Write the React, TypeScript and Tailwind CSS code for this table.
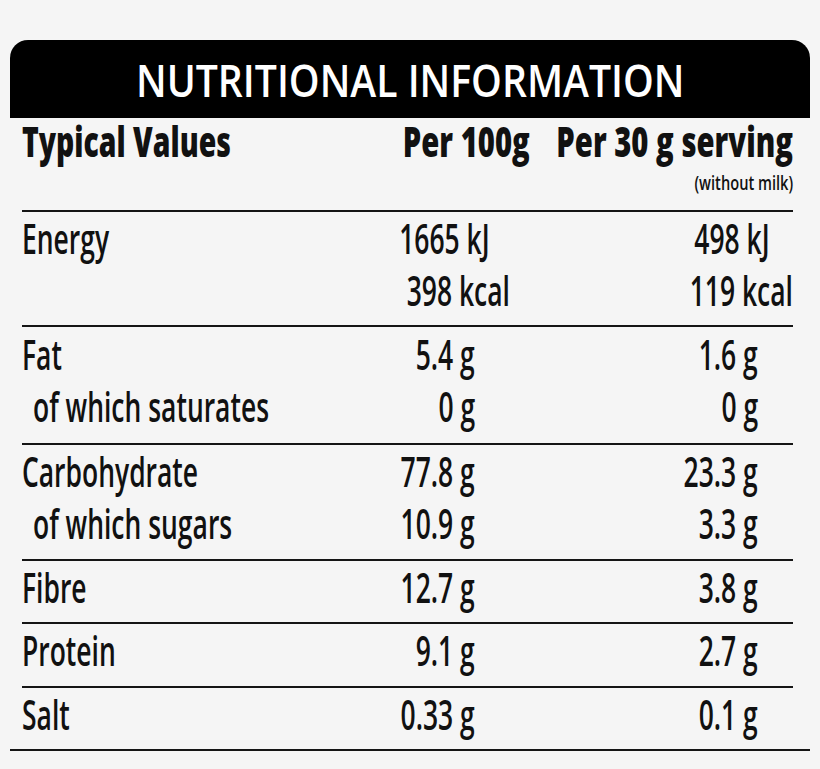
type Cell = { text: string; pad: string };

type Section = {
  labels: { text: string; indent?: boolean }[];
  per100: Cell[];
  serving: Cell[];
  space: string;
};

// right padding so the units line up the way the printed label does
const G_A = 'pr-[35px]';
const G_B = 'pr-[35px]';

const sections: Section[] = [
  {
    labels: [{ text: 'Energy' }, { text: '' }],
    per100: [
      { text: '1665 kJ', pad: 'pr-[20px]' },
      { text: '398 kcal', pad: 'pr-0' },
    ],
    serving: [
      { text: '498 kJ', pad: 'pr-[23px]' },
      { text: '119 kcal', pad: 'pr-0' },
    ],
    space: 'pb-[9px]',
  },
  {
    labels: [{ text: 'Fat' }, { text: 'of which saturates', indent: true }],
    per100: [
      { text: '5.4 g', pad: G_A },
      { text: '0 g', pad: G_A },
    ],
    serving: [
      { text: '1.6 g', pad: G_B },
      { text: '0 g', pad: G_B },
    ],
    space: 'pt-[1px] pb-[11px]',
  },
  {
    labels: [{ text: 'Carbohydrate' }, { text: 'of which sugars', indent: true }],
    per100: [
      { text: '77.8 g', pad: G_A },
      { text: '10.9 g', pad: G_A },
    ],
    serving: [
      { text: '23.3 g', pad: G_B },
      { text: '3.3 g', pad: G_B },
    ],
    space: 'pb-[10px]',
  },
  {
    labels: [{ text: 'Fibre' }],
    per100: [{ text: '12.7 g', pad: G_A }],
    serving: [{ text: '3.8 g', pad: G_B }],
    space: 'pb-[9px]',
  },
  {
    labels: [{ text: 'Protein' }],
    per100: [{ text: '9.1 g', pad: G_A }],
    serving: [{ text: '2.7 g', pad: G_B }],
    space: 'pb-[10px]',
  },
  {
    labels: [{ text: 'Salt' }],
    per100: [{ text: '0.33 g', pad: G_A }],
    serving: [{ text: '0.1 g', pad: G_B }],
    space: 'pb-[9px]',
  },
];

function Narrow({ children, className = '' }: { children: React.ReactNode; className?: string }) {
  return (
    <span className={`inline-block whitespace-nowrap scale-x-[0.63] ${className}`}>
      {children}
    </span>
  );
}

function NutritionSection({ section }: { section: Section }) {
  return (
    <div className={`border-t-2 border-[#151515] ${section.space}`}>
      {section.labels.map((label, i) => (
        <div
          key={i}
          className="grid grid-cols-[minmax(0,1fr)_240px_283px] h-[52px] leading-[52px] text-[42px] font-semibold"
        >
          <div className="min-w-0">
            {label.text && (
              <Narrow className={label.indent ? 'origin-left ml-[11px]' : 'origin-left'}>
                {label.text}
              </Narrow>
            )}
          </div>
          <div className={`flex justify-end ${section.per100[i]?.pad ?? ''}`}>
            {section.per100[i] && <Narrow className="origin-right">{section.per100[i].text}</Narrow>}
          </div>
          <div className={`flex justify-end ${section.serving[i]?.pad ?? ''}`}>
            {section.serving[i] && <Narrow className="origin-right">{section.serving[i].text}</Narrow>}
          </div>
        </div>
      ))}
    </div>
  );
}

export default function App() {
  return (
    <div className="min-h-[769px] w-[820px] bg-[#f5f5f5] pt-[40px] font-['Open_Sans',sans-serif] text-[#111111]">
      <div className="ml-[10px] w-[800px]">
        {/* Title bar */}
        <div className="flex h-[78px] items-center justify-center rounded-t-[18px] bg-black">
          <span className="inline-block whitespace-nowrap scale-x-[0.87] text-[45px] leading-[45px] font-semibold text-white">
            NUTRITIONAL INFORMATION
          </span>
        </div>

        {/* Column headings */}
        <div className="h-[92px] px-[12px] pr-[17px]">
          <div className="grid grid-cols-[minmax(0,1fr)_260px_263px] text-[43px] leading-[46px] font-extrabold">
            <div className="min-w-0">
              <span className="inline-block whitespace-nowrap scale-x-[0.66] origin-left">Typical Values</span>
            </div>
            <div className="flex justify-end">
              <span className="inline-block whitespace-nowrap scale-x-[0.68] origin-right">Per 100g</span>
            </div>
            <div className="flex justify-end">
              <span className="inline-block whitespace-nowrap scale-x-[0.68] origin-right">Per 30 g serving</span>
            </div>
          </div>
          <div className="flex justify-end text-[19px] leading-[38px] font-semibold">
            <span className="inline-block whitespace-nowrap scale-x-[0.77] origin-right">(without milk)</span>
          </div>
        </div>

        {/* Rows */}
        <div className="border-b-2 border-[#151515] px-[12px] pr-[17px]">
          {sections.map((section, i) => (
            <NutritionSection key={i} section={section} />
          ))}
        </div>
      </div>
    </div>
  );
}
